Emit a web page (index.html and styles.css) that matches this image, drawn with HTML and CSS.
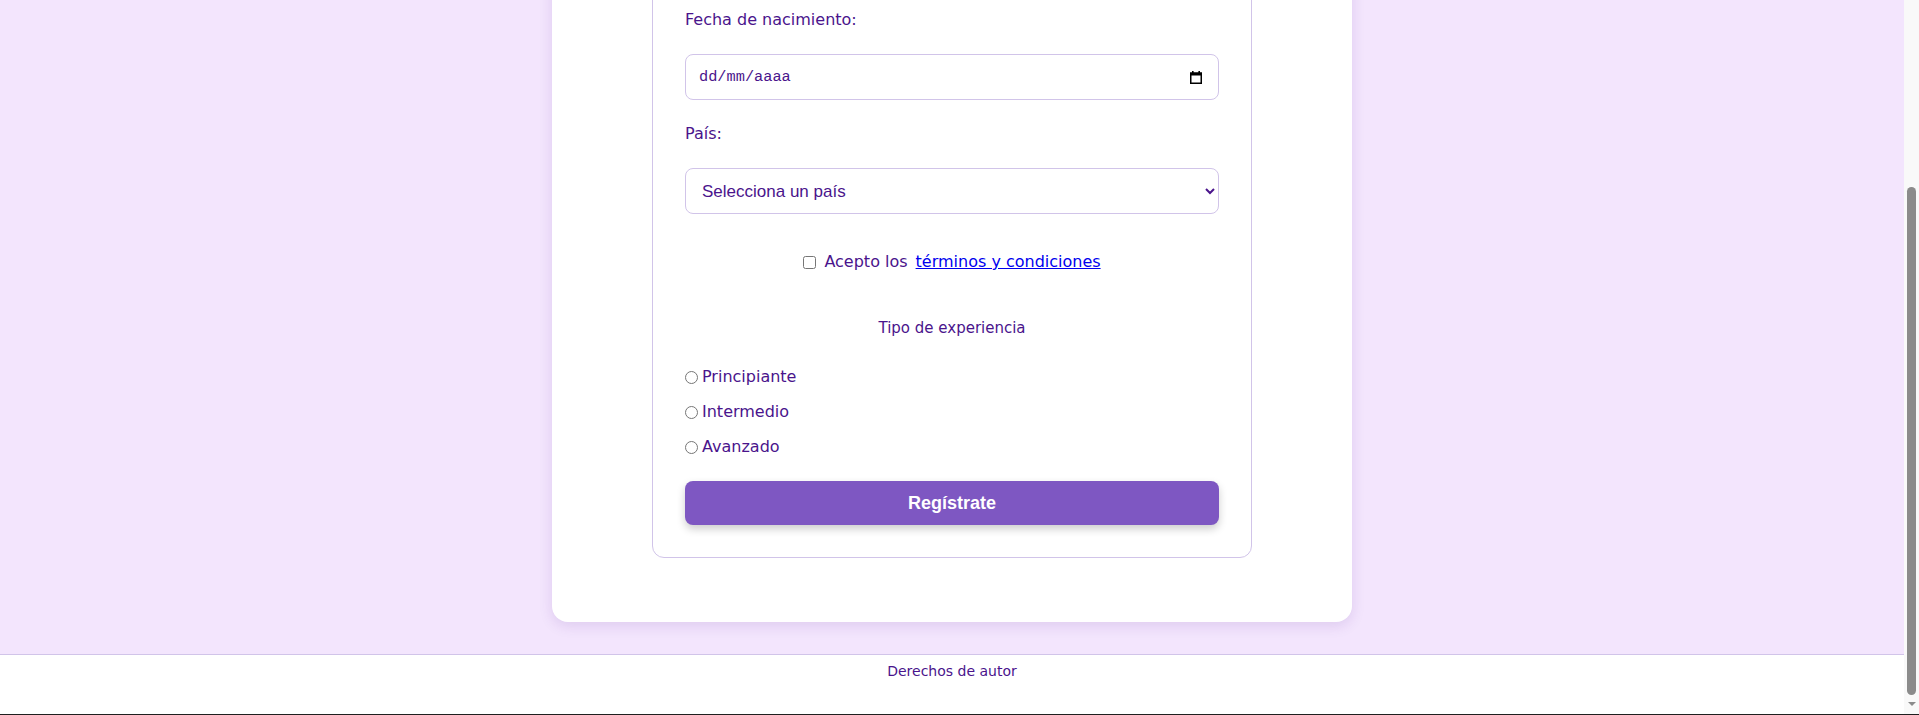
FILE: index.html
```html
<!DOCTYPE html>
<html lang="es">
<head>
<meta charset="utf-8">
<title>Registro</title>
<link rel="stylesheet" href="styles.css">
</head>
<body>
<div class="screen">
  <div class="viewport">
    <main class="main">
      <section class="card">
        <form class="form">
          <div class="field">
            <label class="label">Fecha de nacimiento:</label>
            <div class="date-input">
              <span class="date-placeholder">dd/mm/aaaa</span>
              <svg class="cal-icon" width="12" height="13" viewBox="0 0 12 13" aria-hidden="true">
                <rect x="2" y="0" width="1.6" height="2.5" fill="#000"/>
                <rect x="8.4" y="0" width="1.6" height="2.5" fill="#000"/>
                <rect x="0.75" y="2.25" width="10.5" height="10" fill="#fff" stroke="#000" stroke-width="1.5"/>
                <rect x="0" y="1.5" width="12" height="3" fill="#000"/>
              </svg>
            </div>
          </div>
          <div class="field">
            <label class="label" for="pais">País:</label>
            <select class="select" id="pais">
              <option>Selecciona un país</option>
              <option>México</option>
              <option>España</option>
              <option>Argentina</option>
            </select>
          </div>
          <div class="terms">
            <input class="check" type="checkbox" id="terminos">
            <label for="terminos">Acepto los</label>
            <a class="terms-link" href="#">términos y condiciones</a>
          </div>
          <p class="exp-title">Tipo de experiencia</p>
          <div class="radios">
            <label class="radio"><input class="radio-input" type="radio" name="exp">Principiante</label>
            <label class="radio"><input class="radio-input" type="radio" name="exp">Intermedio</label>
            <label class="radio"><input class="radio-input" type="radio" name="exp">Avanzado</label>
          </div>
          <button class="submit" type="button">Regístrate</button>
        </form>
      </section>
    </main>
    <footer class="footer">Derechos de autor</footer>
  </div>
  <div class="scrollbar">
    <div class="thumb"></div>
    <div class="arrow"></div>
  </div>
</div>
</body>
</html>
```

FILE: styles.css
```css
html, body {
  margin: 0;
  height: 100%;
}

body {
  overflow: hidden;
  font-family: "DejaVu Sans", sans-serif;
  color: #4a148c;
}

.screen {
  display: flex;
  height: 715px;
  box-sizing: border-box;
  border-bottom: 1px solid #1f1f1f;
}

.viewport {
  flex: 1;
  display: flex;
  flex-direction: column;
  justify-content: flex-end;
  overflow: hidden;
  background: #f3e5fd;
}

.main {
  flex-shrink: 0;
  display: flex;
  justify-content: center;
  padding-bottom: 32px;
}

.card {
  width: 800px;
  box-sizing: border-box;
  background: #fff;
  border-radius: 16px;
  padding: 160px 100px 64px;
  box-shadow: 0 4px 14px rgba(74, 20, 140, 0.12);
}

.form {
  border: 1px solid #d1c4e9;
  border-radius: 12px;
  padding: 120px 32px 32px;
}

.field {
  margin-bottom: 24px;
}

.label {
  display: block;
  font-size: 16px;
  line-height: 20px;
  margin-bottom: 24px;
}

.date-input {
  display: flex;
  align-items: center;
  justify-content: space-between;
  height: 46px;
  box-sizing: border-box;
  border: 1px solid #d1c4e9;
  border-radius: 8px;
  padding: 0 16px 0 13px;
  background: #fff;
}

.date-placeholder {
  font-family: "Liberation Mono", monospace;
  font-size: 15.3px;
  color: #4a148c;
}

.cal-icon {
  display: block;
}

.select {
  display: block;
  width: 100%;
  height: 46px;
  box-sizing: border-box;
  border: 1px solid #d1c4e9;
  border-radius: 8px;
  padding: 0 12px;
  background: #fff;
  font-family: "Liberation Sans", Arial, sans-serif;
  font-size: 17px;
  color: #4a148c;
}

.terms {
  margin-top: 38px;
  display: flex;
  justify-content: center;
  align-items: center;
  font-size: 16px;
  line-height: 20px;
}

.check {
  width: 13px;
  height: 13px;
  margin: 0 8px 0 0;
}

.terms-link {
  color: #0000ee;
  margin-left: 8px;
}

.exp-title {
  margin: 46px 0 0;
  text-align: center;
  font-size: 15px;
  line-height: 20px;
}

.radios {
  margin-top: 29px;
  display: flex;
  flex-direction: column;
  gap: 15px;
}

.radio {
  display: flex;
  align-items: center;
  font-size: 16px;
  line-height: 20px;
}

.radio-input {
  width: 13px;
  height: 13px;
  margin: 0 4px 0 0;
}

.submit {
  display: block;
  width: 100%;
  height: 44px;
  margin-top: 24px;
  border: none;
  border-radius: 8px;
  background: #7e57c2;
  color: #fff;
  font-family: "Liberation Sans", Arial, sans-serif;
  font-weight: bold;
  font-size: 18px;
  box-shadow: 0 4px 8px rgba(0, 0, 0, 0.2);
}

.footer {
  flex-shrink: 0;
  background: #fff;
  border-top: 1px solid #d1c4e9;
  text-align: center;
  font-size: 14px;
  line-height: 17px;
  padding: 8px 0 34px;
}

.scrollbar {
  width: 15px;
  flex-shrink: 0;
  box-sizing: border-box;
  background: #f9f9f9;
  display: flex;
  flex-direction: column;
  align-items: center;
  padding-top: 187px;
}

.thumb {
  width: 9px;
  height: 508px;
  border-radius: 5px;
  background: #8b8b8b;
}

.arrow {
  margin-top: 7px;
  width: 0;
  height: 0;
  border-left: 4.5px solid transparent;
  border-right: 4.5px solid transparent;
  border-top: 4px solid #8b8b8b;
}
```
